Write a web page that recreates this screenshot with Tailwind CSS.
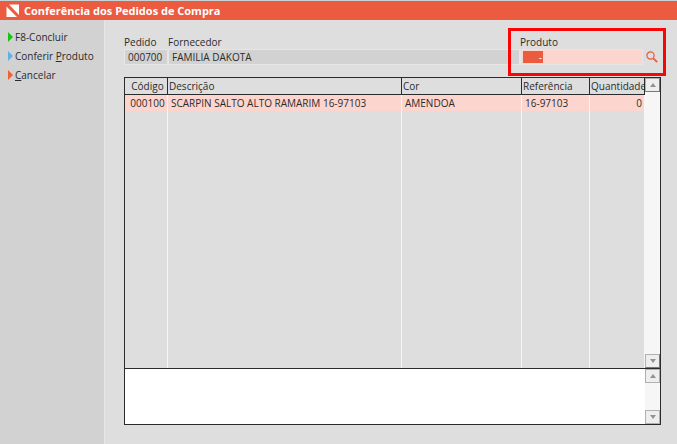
<!DOCTYPE html>
<html lang="pt-BR">
<head>
  <meta charset="UTF-8">
  <meta name="viewport" content="width=device-width, initial-scale=1.0">
  <title>Conferência dos Pedidos de Compra</title>
  <script src="https://cdn.jsdelivr.net/npm/@tailwindcss/browser@4"></script>
</head>
<body class="flex flex-col h-screen overflow-hidden bg-[#dedede] font-['Open_Sans',sans-serif] text-[10px] leading-4 text-[#2b2b2b]">
  <!-- Title bar -->
  <header class="flex items-center gap-1 h-5 shrink-0 pl-1.5 bg-[#ea5b3f] border-t border-[#c9d3d5] text-white">
    <svg class="w-3.5 h-3.5" viewBox="0 0 14 14" fill="currentColor">
      <path d="M3 0.500H13V11Z M0.500 2.500L11 13H0.500Z" />
    </svg>
    <h1 class="text-[11px] font-bold">Conferência dos Pedidos de Compra</h1>
  </header>

  <div class="flex flex-1 min-h-0">
    <!-- Actions -->
    <nav class="flex flex-col items-start gap-[3px] w-[105px] shrink-0 pt-[9px] pl-2 bg-[#d2d2d2] border-r border-[#e6e6e6] whitespace-nowrap">
      <button type="button" class="flex items-center gap-0.5">
        <svg class="w-[5px] h-2.5" viewBox="0 0 5 10"><path d="M0 0L5 5L0 10Z" fill="#16c60c" /></svg>
        F8-Concluir
      </button>
      <button type="button" class="flex items-center gap-0.5">
        <svg class="w-[5px] h-2.5" viewBox="0 0 5 10"><path d="M0 0L5 5L0 10Z" fill="#5db2e0" /></svg>
        <span>Conferir <u>P</u>roduto</span>
      </button>
      <button type="button" class="flex items-center gap-0.5">
        <svg class="w-[5px] h-2.5" viewBox="0 0 5 10"><path d="M0 0L5 5L0 10Z" fill="#f4602f" /></svg>
        <span><u>C</u>ancelar</span>
      </button>
    </nav>

    <main class="flex flex-col flex-1 min-w-0 pt-[15px] pl-[19px] pr-4 pb-[19px]">
      <!-- Order fields -->
      <form class="flex shrink-0 mb-3">
        <div class="w-11 shrink-0">
          <label for="pedido" class="block leading-[14px]">Pedido</label>
          <input id="pedido" type="text" value="000700" readonly class="block w-full h-4 pl-[3px] bg-[#d2d2d2] border border-[#e6e6e6] outline-none">
        </div>
        <div class="flex-1 min-w-0">
          <label for="fornecedor" class="block leading-[14px]">Fornecedor</label>
          <input id="fornecedor" type="text" value="FAMILIA DAKOTA" readonly class="block w-full h-4 pl-[3px] bg-[#d2d2d2] border border-[#e6e6e6] outline-none">
        </div>
        <div class="relative w-[141px] shrink-0">
          <label for="produto" class="block leading-[14px]">Produto</label>
          <div class="flex items-center gap-[3px]">
            <div class="relative w-[123px]">
              <input id="produto" type="text" class="block w-full h-4 bg-[#fcd6ce] border border-[#e6e6e6] outline-none">
              <span class="absolute left-[3px] top-0.5 w-5 h-3 bg-[#ea5b3f] pr-px text-right text-white leading-3">-</span>
            </div>
            <button type="button" aria-label="Pesquisar produto">
              <svg class="w-3 h-3" viewBox="0 0 12 12" fill="none" stroke="#ea5b3f">
                <circle cx="4.500" cy="4.500" r="3.600" stroke-width="1.200" />
                <path d="M7.300 7.300L11.200 11.200" stroke-width="1.800" />
              </svg>
            </button>
          </div>
          <div class="absolute -left-3 -right-[5px] -top-[7px] -bottom-[11px] border-3 border-[#fa0505] pointer-events-none"></div>
        </div>
      </form>

      <div class="flex flex-col flex-1 min-h-0 border border-[#2b2b2b]">
        <!-- Items -->
        <div class="flex flex-1 min-h-0">
          <div class="flex-1 min-w-0">
            <table class="w-full h-full table-fixed border-separate border-spacing-0 whitespace-nowrap text-left">
              <colgroup>
                <col class="w-[43px]">
                <col>
                <col class="w-[120px]">
                <col class="w-[68px]">
                <col class="w-[55px]">
              </colgroup>
              <thead>
                <tr class="h-[17px] *:p-0 *:pl-px *:font-normal *:border-r *:border-b *:border-[#2b2b2b]">
                  <th class="text-center"><span class="pl-0.5">Código</span></th>
                  <th>Descrição</th>
                  <th>Cor</th>
                  <th>Referência</th>
                  <th>Quantidade</th>
                </tr>
              </thead>
              <tbody>
                <tr class="h-4 bg-[#fcd6ce] *:py-0 *:pl-[3px] *:pr-0 *:border-r *:border-[#f6f6f6]">
                  <td class="text-center">000100</td>
                  <td>SCARPIN SALTO ALTO RAMARIM 16-97103</td>
                  <td>AMENDOA</td>
                  <td>16-97103</td>
                  <td class="text-right"><span class="pr-0.5">0</span></td>
                </tr>
                <tr class="*:p-0 *:border-r *:border-[#f6f6f6]">
                  <td></td><td></td><td></td><td></td><td></td>
                </tr>
              </tbody>
            </table>
          </div>
          <div class="flex flex-col justify-between w-[15px] shrink-0 bg-[#f6f6f6]">
            <button type="button" aria-label="Rolar para cima" class="flex items-center justify-center h-3.5 bg-[#eeeeee] border border-[#b0b0b0] border-r-[#777777] border-b-[#777777]">
              <svg class="w-1.5 h-1" viewBox="0 0 6 4"><path d="M0 4L3 0L6 4Z" fill="#929292" /></svg>
            </button>
            <button type="button" aria-label="Rolar para baixo" class="flex items-center justify-center h-3.5 bg-[#eeeeee] border border-[#b0b0b0] border-r-[#777777] border-b-[#777777]">
              <svg class="w-1.5 h-1" viewBox="0 0 6 4"><path d="M0 0H6L3 4Z" fill="#929292" /></svg>
            </button>
          </div>
        </div>

        <!-- Notes -->
        <div class="flex h-14 shrink-0 bg-white border-t border-[#2b2b2b]">
          <textarea aria-label="Observações" class="flex-1 resize-none outline-none"></textarea>
          <div class="flex flex-col justify-between w-[15px] shrink-0 bg-[#f6f6f6]">
            <button type="button" aria-label="Rolar observações para cima" class="flex items-center justify-center h-3.5 bg-[#eeeeee] border border-[#b0b0b0]">
              <svg class="w-1.5 h-1" viewBox="0 0 6 4"><path d="M0 4L3 0L6 4Z" fill="#929292" /></svg>
            </button>
            <button type="button" aria-label="Rolar observações para baixo" class="flex items-center justify-center h-3.5 bg-[#eeeeee] border border-[#b0b0b0]">
              <svg class="w-1.5 h-1" viewBox="0 0 6 4"><path d="M0 0H6L3 4Z" fill="#929292" /></svg>
            </button>
          </div>
        </div>
      </div>
    </main>
  </div>
</body>
</html>
